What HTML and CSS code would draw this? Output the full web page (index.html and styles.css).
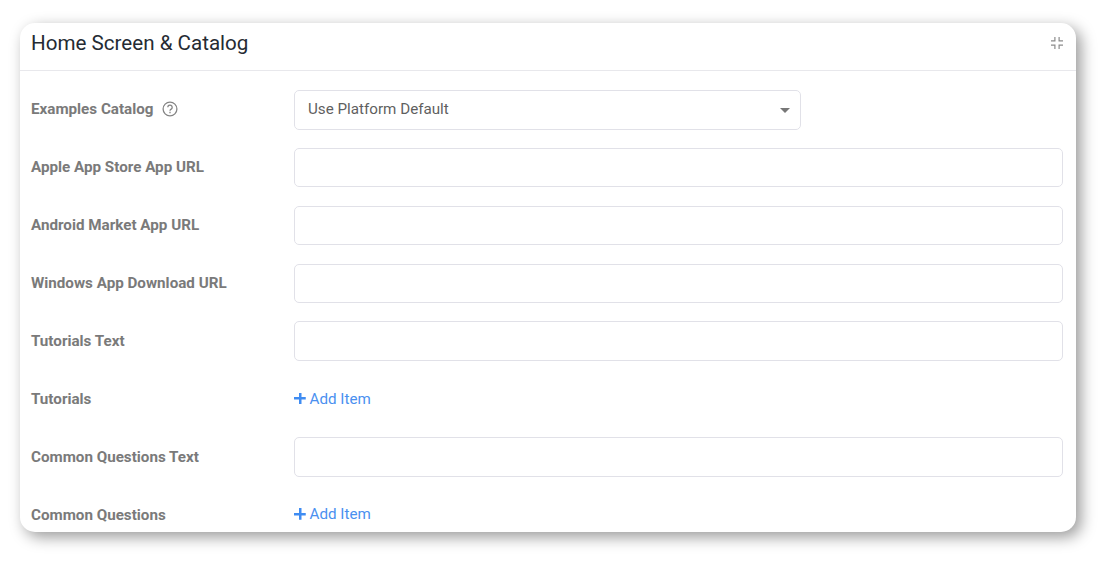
FILE: index.html
```html
<!DOCTYPE html>
<html lang="en">
<head>
<meta charset="utf-8">
<title>Home Screen &amp; Catalog</title>
<link rel="stylesheet" href="styles.css">
</head>
<body>
<section class="card">
  <header class="card-head">
    <h2 class="card-title">Home Screen &amp; Catalog</h2>
    <svg class="collapse" width="14" height="14" viewBox="0 0 14 14" fill="none" stroke="#8c8c8c" stroke-width="1.2"><path d="M1 4.900h3.900V1M13 4.900H9.100V1M1 9.100h3.900V13M13 9.100H9.100V13"/></svg>
  </header>
  <div class="form">
    <div class="row">
      <label class="label">Examples Catalog
        <svg class="help" width="16" height="16" viewBox="0 0 16 16" fill="none" stroke="#858585" stroke-width="1.300"><circle cx="8" cy="8" r="6.900"/><path d="M5.800 6.300a2.200 2.200 0 1 1 3.400 1.800c-.8.5-1.200.9-1.200 1.700"/><path d="M8 10.800v1.400"/></svg>
      </label>
      <div class="select">Use Platform Default<span class="caret"></span></div>
    </div>
    <div class="row"><label class="label">Apple App Store App URL</label><input class="input" type="text"></div>
    <div class="row"><label class="label">Android Market App URL</label><input class="input" type="text"></div>
    <div class="row"><label class="label">Windows App Download URL</label><input class="input" type="text"></div>
    <div class="row"><label class="label">Tutorials Text</label><input class="input" type="text"></div>
    <div class="row"><label class="label">Tutorials</label><a class="add"><span class="plus"></span>Add Item</a></div>
    <div class="row"><label class="label label-low">Common Questions Text</label><input class="input" type="text"></div>
    <div class="row"><label class="label label-low">Common Questions</label><a class="add"><span class="plus"></span>Add Item</a></div>
  </div>
</section>
</body>
</html>
```
FILE: styles.css
```css
* { box-sizing: border-box; }
html, body { margin: 0; height: 100%; background: #fff; overflow: hidden; }
body { padding: 23px 29px 30px 20px; font-family: Roboto, "Liberation Sans", sans-serif; }
.card {
  height: 509px;
  background: #fff;
  border-radius: 15px;
  box-shadow: 5px 5px 15px rgba(0, 0, 0, .4);
  overflow: hidden;
}
.card-head {
  height: 48px;
  display: flex;
  align-items: center;
  justify-content: space-between;
  padding: 0 12px 8px 11px;
  border-bottom: 1px solid #e8e8ec;
}
.card-title { margin: 0; font-size: 20.600px; font-weight: 400; color: #252b33; }
.form { padding: 19px 13px 0 11px; display: flex; flex-direction: column; gap: 18.250px; }
.row { display: flex; align-items: center; height: 39.600px; }
.label {
  width: 263px;
  flex: none;
  display: flex;
  align-items: center;
  gap: 8px;
  padding-bottom: 1px;
  font-size: 15.200px;
  font-weight: 700;
  color: #7a7a7a;
}
.label-low { padding-bottom: 0; }
.input, .select {
  height: 100%;
  background: #fff;
  border: 1px solid #e1e1e8;
  border-radius: 5px;
  outline: none;
}
.input { flex: 1; }
.select {
  width: 507px;
  display: flex;
  align-items: center;
  justify-content: space-between;
  padding: 0 10px 1px 13px;
  font-size: 15.200px;
  color: #5f5f5f;
}
.caret { width: 0; height: 0; border: 5px solid transparent; border-top-color: #777; border-bottom: 0; margin-top: 2px; }
.add { display: flex; align-items: center; gap: 4px; padding-bottom: 1px; font-size: 15.200px; color: #4a90f0; }
.plus {
  width: 11.500px;
  height: 11.500px;
  background:
    linear-gradient(#3f8cf2, #3f8cf2) center / 100% 2.500px no-repeat,
    linear-gradient(#3f8cf2, #3f8cf2) center / 2.500px 100% no-repeat;
}
```
